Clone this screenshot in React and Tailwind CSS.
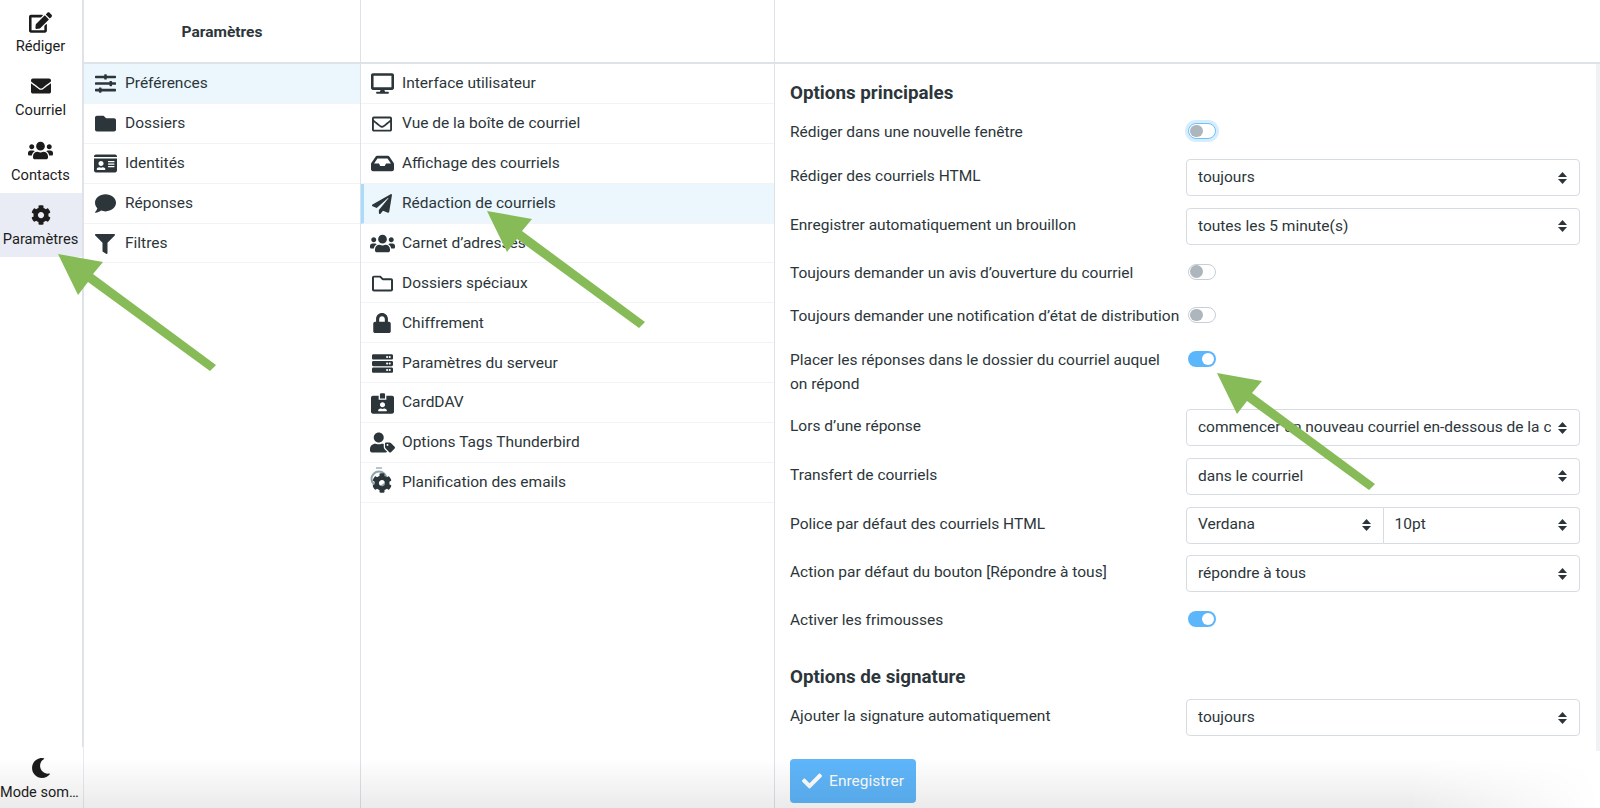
import React from 'react';
import {
  FaEdit, FaEnvelope, FaUsers, FaCog, FaMoon, FaSlidersH, FaFolder, FaIdCard, FaComment, FaFilter,
  FaDesktop, FaRegEnvelope, FaInbox, FaPaperPlane, FaRegFolder, FaLock, FaServer, FaIdCardAlt, FaUserTag, FaCheck,
} from 'react-icons/fa';

// react-icons squeezes wide glyphs into a square box, so wide ones get a bigger size
const nav = [
  { label: 'Rédiger', icon: FaEdit, size: 23 },
  { label: 'Courriel', icon: FaEnvelope, size: 20 },
  { label: 'Contacts', icon: FaUsers, size: 25 },
  { label: 'Paramètres', icon: FaCog, size: 20, active: true },
];

const sections = [
  { label: 'Préférences', icon: FaSlidersH, size: 21, active: true },
  { label: 'Dossiers', icon: FaFolder, size: 21 },
  { label: 'Identités', icon: FaIdCard, size: 23 },
  { label: 'Réponses', icon: FaComment, size: 21 },
  { label: 'Filtres', icon: FaFilter, size: 20 },
];

// stopwatch ring peeking out behind the cog
function PlanningIcon() {
  return (
    <span className="relative flex">
      <svg width="22" height="26" viewBox="0 0 22 26" className="absolute -left-[3px] -top-[8px]">
        <circle cx="10" cy="14" r="7.5" fill="none" stroke="#8ea4ad" strokeWidth="2" />
        <path d="M7 3h6" stroke="#9fb2ba" strokeWidth="1.5" />
      </svg>
      <FaCog size={20} className="relative" />
    </span>
  );
}

const prefs = [
  { label: 'Interface utilisateur', icon: FaDesktop, size: 23 },
  { label: 'Vue de la boîte de courriel', icon: FaRegEnvelope, size: 20 },
  { label: 'Affichage des courriels', icon: FaInbox, size: 23 },
  { label: 'Rédaction de courriels', icon: FaPaperPlane, size: 20, active: true },
  { label: 'Carnet d’adresses', icon: FaUsers, size: 25 },
  { label: 'Dossiers spéciaux', icon: FaRegFolder, size: 21 },
  { label: 'Chiffrement', icon: FaLock, size: 20 },
  { label: 'Paramètres du serveur', icon: FaServer, size: 21 },
  { label: 'CardDAV', icon: FaIdCardAlt, size: 23 },
  { label: 'Options Tags Thunderbird', icon: FaUserTag, size: 25 },
  { label: 'Planification des emails', icon: PlanningIcon },
];

function Caret() {
  return (
    <svg width="9" height="12" viewBox="0 0 9 12" className="shrink-0" fill="#2c363a">
      <path d="M4.5 0 9 5H0z" />
      <path d="M0 7h9l-4.5 5z" />
    </svg>
  );
}

function Select({ children, className = 'rounded border' }) {
  return (
    <div className={`flex h-[37px] min-w-0 flex-1 items-center border-[#d6dce2] bg-white pl-[11px] pr-[12px] ${className}`}>
      <span className="mr-[7px] min-w-0 flex-1 overflow-hidden whitespace-nowrap text-[#2c363a]">{children}</span>
      <Caret />
    </div>
  );
}

function Toggle({ on, focus }) {
  if (on) {
    return (
      <div className="flex h-[16px] w-[28px] items-center justify-end rounded-full bg-[#5cb6fb] pr-[2px]">
        <div className="h-[12px] w-[12px] rounded-full bg-white" />
      </div>
    );
  }
  return (
    <div className={`flex h-[16px] w-[28px] items-center rounded-full border bg-white pl-[1px] ${focus ? 'border-[#6fc0fb] shadow-[0_0_0_3px_rgba(92,182,251,0.25)]' : 'border-[#c8ced4]'}`}>
      <div className="h-[12.5px] w-[12.5px] rounded-full bg-[#adb5bd]" />
    </div>
  );
}

function Row({ label, height, children, toggle }) {
  return (
    <div className={`flex items-start ${height}`}>
      <div className={`w-[396px] shrink-0 pr-[4px] leading-6 ${toggle ? 'pt-[10px]' : 'pt-[11px]'}`}>{label}</div>
      <div className={`flex min-w-0 flex-1 ${toggle ? 'pt-[13px] pl-[2px]' : 'pt-[6px]'}`}>{children}</div>
    </div>
  );
}

function ListRow({ item, accent }) {
  const Icon = item.icon;
  const edge = accent && item.active ? 'border-l-[3px] border-l-[#a9dcfb] pl-[3px]' : 'pl-[6px]';
  return (
    <div className={`flex h-[39.9px] items-center border-b border-[#f1f3f5] pt-[1px] ${edge} ${item.active ? 'bg-[#ebf7fd]' : ''}`}>
      <span className="mr-[5px] flex w-[30px] justify-center"><Icon size={item.size} /></span>
      {item.label}
    </div>
  );
}

function Arrow({ x, y }) {
  return (
    <polygon
      transform={`translate(${x} ${y})`}
      fill="#86bb57"
      points="0,0 45,8 35,20 158,111 152,117 30,28 20,41"
    />
  );
}

export default function App() {
  return (
    <div className="relative flex h-[808px] w-[1600px] overflow-hidden bg-white font-['Roboto',sans-serif] text-[15.5px] text-[#2c363a]">
      {/* app menu */}
      <div className="flex w-[82px] shrink-0 flex-col justify-between text-[#1c1c1c]">
        <div>
          {nav.map((n) => (
            <div key={n.label} className={`flex h-[64.3px] flex-col items-center pt-[12px] pr-[1px] ${n.active ? 'bg-[#e9ecf4]' : ''}`}>
              <span className="flex h-[20px] items-center"><n.icon size={n.size} /></span>
              <span className="mt-[4px] text-[14.7px] leading-[21px]">{n.label}</span>
            </div>
          ))}
        </div>
        <div className="flex h-[64px] flex-col items-center pt-[14px] pr-[1px]">
          <FaMoon size={20} />
          <span className="mt-[5px] w-[81px] truncate text-center text-[14.5px] leading-5">Mode sombre</span>
        </div>
      </div>
      <div className="flex w-[2px] shrink-0 flex-col border-r border-[#e6eaee]">
        <div className="h-[747px] w-[2px] bg-[#dfe3e9]" />
      </div>

      {/* settings sections */}
      <div className="w-[277px] shrink-0 border-r border-[#dce3e8]">
        <div className="flex h-[64px] items-center justify-center border-b-2 border-[#dde3e8] pt-[4px] font-bold">Paramètres</div>
        {sections.map((s) => <ListRow key={s.label} item={s} />)}
      </div>

      {/* preference sections */}
      <div className="w-[414px] shrink-0 border-r border-[#dce3e8]">
        <div className="h-[64px] border-b-2 border-[#dde3e8]" />
        {prefs.map((s) => <ListRow key={s.label} item={s} accent />)}
      </div>

      {/* form */}
      <div className="flex min-w-0 flex-1 flex-col">
        <div className="h-[64px] shrink-0 border-b-2 border-[#dde3e8]" />
        <div className="flex min-h-0 flex-1">
          <div className="min-w-0 flex-1 pl-[15px] pr-[16px]">
            <div className="h-[46px] pt-[17px] text-[18.8px] font-bold leading-6">Options principales</div>
            <Row label="Rédiger dans une nouvelle fenêtre" height="h-[43px]" toggle><Toggle focus /></Row>
            <Row label="Rédiger des courriels HTML" height="h-[48.75px]"><Select>toujours</Select></Row>
            <Row label="Enregistrer automatiquement un brouillon" height="h-[48.75px]"><Select>toutes les 5 minute(s)</Select></Row>
            <Row label="Toujours demander un avis d’ouverture du courriel" height="h-[43.5px]" toggle><Toggle /></Row>
            <Row label="Toujours demander une notification d’état de distribution" height="h-[43.5px]" toggle><Toggle /></Row>
            <Row label={<>Placer les réponses dans le dossier du courriel auquel<br />on répond</>} height="h-[65.5px]" toggle><Toggle on /></Row>
            <Row label="Lors d’une réponse" height="h-[48.75px]"><Select>commencer un nouveau courriel en-dessous de la citation</Select></Row>
            <Row label="Transfert de courriels" height="h-[48.75px]"><Select>dans le courriel</Select></Row>
            <Row label="Police par défaut des courriels HTML" height="h-[48.75px]">
              <Select className="rounded-l border">Verdana</Select>
              <Select className="rounded-r border-y border-r">10pt</Select>
            </Row>
            <Row label="Action par défaut du bouton [Répondre à tous]" height="h-[48.75px]"><Select>répondre à tous</Select></Row>
            <Row label="Activer les frimousses" height="h-[43.5px]" toggle><Toggle on /></Row>
            <div className="h-[51.5px] pt-[23px] text-[18.8px] font-bold leading-6">Options de signature</div>
            <Row label="Ajouter la signature automatiquement" height="h-[48.75px]"><Select>toujours</Select></Row>
            <button className="mt-[17px] flex h-[44px] w-[126px] items-center justify-center gap-[7px] rounded bg-[#5fb6fa] pt-[1px] text-white">
              <FaCheck size={20} />
              Enregistrer
            </button>
          </div>
          <div className="h-[687px] w-[4px] shrink-0 bg-[#f1f2f3]" />
        </div>
      </div>

      {/* bottom fade */}
      <div className="pointer-events-none absolute inset-x-0 bottom-0 h-[50px] bg-gradient-to-b from-transparent to-black/[0.08] [mask-image:linear-gradient(to_right,black_88%,transparent)]" />

      {/* annotation arrows */}
      <svg className="pointer-events-none absolute inset-0" width="1600" height="808">
        <Arrow x={58} y={254} />
        <Arrow x={487} y={211} />
        <Arrow x={1217} y={373} />
      </svg>
    </div>
  );
}
